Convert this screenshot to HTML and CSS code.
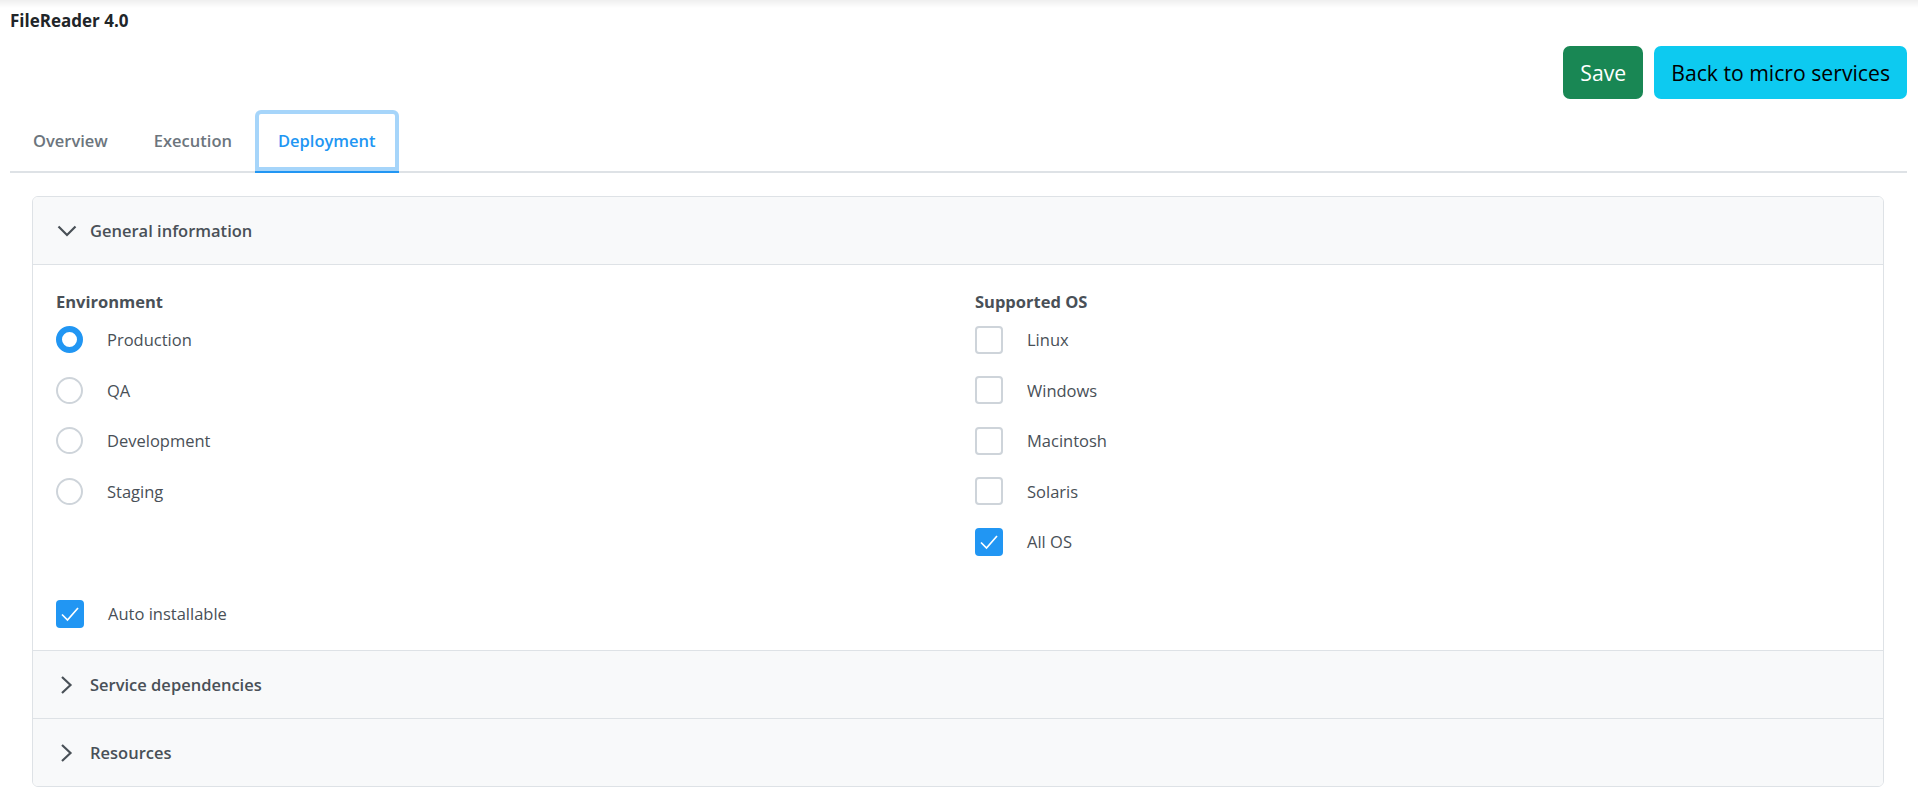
FILE: index.html
```html
<!DOCTYPE html>
<html lang="en">

<head>
    <meta charset="UTF-8" />
    <title>FileReader 4.0</title>
    <link rel="stylesheet" href="styles.css">
</head>

<body>
    <div class="top-shadow"></div>
    <div class="page">
        <h1 class="title">FileReader 4.0</h1>
        <div class="actions">
            <button type="button" class="btn btn-save">Save</button>
            <button type="button" class="btn btn-back">Back to micro services</button>
        </div>
        <ul class="tabs">
            <li class="tab">Overview</li>
            <li class="tab">Execution</li>
            <li class="tab active">Deployment</li>
        </ul>
        <div class="content">
            <div class="accordion">
                <div class="acc-item">
                    <div class="acc-header">
                        <svg class="chevron-down" width="20" height="12" viewBox="0 0 20 12">
                            <polyline points="1.5,1.5 10,10 18.5,1.5" />
                        </svg>
                        <span>General information</span>
                    </div>
                    <div class="acc-body">
                        <div class="columns">
                            <div class="column">
                                <h3 class="group-title">Environment</h3>
                                <label class="option">
                                    <span class="radio checked"></span>
                                    <span>Production</span>
                                </label>
                                <label class="option">
                                    <span class="radio"></span>
                                    <span>QA</span>
                                </label>
                                <label class="option">
                                    <span class="radio"></span>
                                    <span>Development</span>
                                </label>
                                <label class="option">
                                    <span class="radio"></span>
                                    <span>Staging</span>
                                </label>
                            </div>
                            <div class="column">
                                <h3 class="group-title">Supported OS</h3>
                                <label class="option">
                                    <span class="checkbox"></span>
                                    <span>Linux</span>
                                </label>
                                <label class="option">
                                    <span class="checkbox"></span>
                                    <span>Windows</span>
                                </label>
                                <label class="option">
                                    <span class="checkbox"></span>
                                    <span>Macintosh</span>
                                </label>
                                <label class="option">
                                    <span class="checkbox"></span>
                                    <span>Solaris</span>
                                </label>
                                <label class="option">
                                    <span class="checkbox checked">
                                        <svg width="28" height="28" viewBox="0 0 28 28">
                                            <polyline points="6,14.5 11.5,20 22,8" />
                                        </svg>
                                    </span>
                                    <span>All OS</span>
                                </label>
                            </div>
                        </div>
                        <label class="option auto-install">
                            <span class="checkbox checked">
                                <svg width="28" height="28" viewBox="0 0 28 28">
                                    <polyline points="6,14.5 11.5,20 22,8" />
                                </svg>
                            </span>
                            <span>Auto installable</span>
                        </label>
                    </div>
                </div>
                <div class="acc-item">
                    <div class="acc-header">
                        <svg class="chevron-right" width="20" height="18" viewBox="0 0 20 18">
                            <polyline points="5,1 13.5,9 5,17" />
                        </svg>
                        <span>Service dependencies</span>
                    </div>
                </div>
                <div class="acc-item">
                    <div class="acc-header">
                        <svg class="chevron-right" width="20" height="18" viewBox="0 0 20 18">
                            <polyline points="5,1 13.5,9 5,17" />
                        </svg>
                        <span>Resources</span>
                    </div>
                </div>
            </div>
        </div>
    </div>
</body>

</html>
```

FILE: styles.css
```css
body {
    margin: 0;
    font-family: "Open Sans", "Noto Sans", sans-serif;
    font-size: 16.5px;
    color: #495057;
    background-color: #ffffff;
}

.top-shadow {
    height: 8px;
    background: linear-gradient(#efefef, #ffffff);
}

.page {
    padding: 0 11px 0 10px;
}

.title {
    margin: 1px 0 0;
    font-size: 17px;
    line-height: 24px;
    font-weight: 700;
    color: #212529;
}

.actions {
    display: flex;
    justify-content: flex-end;
    gap: 11px;
    margin-top: 13px;
}

.btn {
    height: 53px;
    padding: 0 17px;
    border: none;
    border-radius: 7px;
    font-family: "Open Sans", "Noto Sans", sans-serif;
    font-size: 21.2px;
}

.btn-save {
    background-color: #198754;
    color: #ffffff;
}

.btn-back {
    background-color: #0dcaf0;
    color: #000000;
}

.tabs {
    display: flex;
    list-style: none;
    margin: 11px 0 0;
    padding: 0;
    border-bottom: 2px solid #dee2e6;
}

.tab {
    height: 61px;
    line-height: 62px;
    padding: 0 23px;
    margin-bottom: -2px;
    border-bottom: 2px solid transparent;
    border-top-left-radius: 6px;
    border-top-right-radius: 6px;
    color: #6c757d;
    font-weight: 600;
}

.tab.active {
    color: #2196f3;
    border-bottom-color: #2196f3;
    box-shadow: inset 0 0 0 4px #a6d5fa;
}

.content {
    padding: 23px 23px 0 22px;
}

.accordion {
    border: 1px solid #dee2e6;
    border-radius: 6px;
    overflow: hidden;
}

.acc-item + .acc-item {
    border-top: 1px solid #dee2e6;
}

.acc-header {
    display: flex;
    align-items: center;
    gap: 13px;
    height: 67px;
    padding: 0 24px;
    background-color: #f8f9fa;
    font-weight: 600;
    color: #495057;
}

.acc-header svg polyline {
    fill: none;
    stroke: #495057;
    stroke-width: 2.2;
}

.acc-body {
    border-top: 1px solid #dee2e6;
    padding: 24px 23px 23px;
}

.columns {
    display: grid;
    grid-template-columns: 1fr 1fr;
    gap: 34px;
}

.group-title {
    margin: 0 0 12px;
    font-size: 16.5px;
    line-height: 25px;
    font-weight: 700;
    color: #495057;
}

.option {
    display: flex;
    align-items: center;
    gap: 24px;
    height: 27px;
    margin-bottom: 23.5px;
}

.radio {
    box-sizing: border-box;
    width: 27px;
    height: 27px;
    border: 2px solid #ced4da;
    border-radius: 50%;
    background-color: #ffffff;
}

.radio.checked {
    border: 6px solid #2196f3;
}

.checkbox {
    box-sizing: border-box;
    display: flex;
    width: 28px;
    height: 28px;
    border: 2px solid #ced4da;
    border-radius: 4px;
    background-color: #ffffff;
}

.checkbox.checked {
    border: none;
    background-color: #2196f3;
}

.checkbox svg polyline {
    fill: none;
    stroke: #ffffff;
    stroke-width: 1.7;
}

.auto-install {
    margin-top: 21.5px;
    margin-bottom: 0;
}
```
